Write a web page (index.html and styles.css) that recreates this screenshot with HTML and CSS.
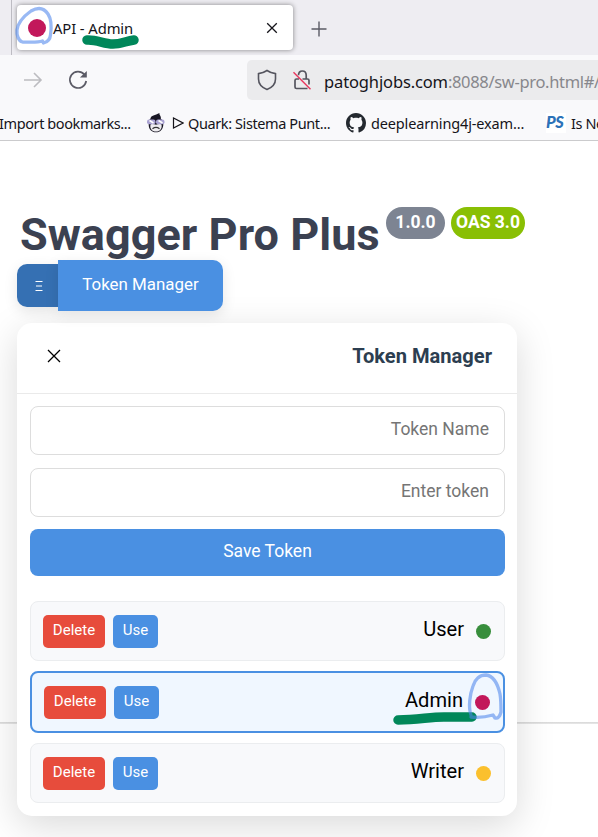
FILE: index.html
```
<!DOCTYPE html>
<html lang="en">
<head>
<meta charset="utf-8">
<title>API - Admin</title>
<link rel="stylesheet" href="styles.css">
</head>
<body>
<div class="window">
  <header class="browser">
    <div class="tabs">
      <div class="tab">
        <span class="favicon"></span>
        <span class="tab-title">API - Admin</span>
        <svg class="tab-close" width="12" height="12" viewBox="0 0 12 12"><path d="M1.2 1.2l9.6 9.6M10.8 1.2l-9.6 9.6"/></svg>
      </div>
      <svg class="tab-add" width="16" height="16" viewBox="0 0 16 16"><path d="M8 .5v15M.5 8h15"/></svg>
    </div>
    <div class="nav">
      <svg class="forward" width="20" height="18" viewBox="0 0 20 18"><path d="M1 9h17M11 2l7 7-7 7"/></svg>
      <svg class="reload" width="20" height="20" viewBox="0 0 20 20"><path class="arc" d="M16.3 4.4A8.2 8.2 0 1 0 18.2 11"/><path class="tip" d="M18.8 1v6.6h-6.9z"/></svg>
      <div class="url">
        <svg class="shield" width="20" height="22" viewBox="0 0 20 22"><path d="M10 1.5C7.500 3.200 4.600 4.200 1.500 4.600v5.300c0 4.500 3.500 8.500 8.500 10.600 5-2.100 8.500-6.100 8.500-10.600V4.600C15.400 4.200 12.500 3.200 10 1.500z"/></svg>
        <svg class="lock" width="20" height="22" viewBox="0 0 20 22"><path d="M6.500 6.300C6.500 3.500 8.100 2 10.300 2s3.900 1.500 3.900 4.300v3.200M10.500 10h5q1.500 0 1.500 1.500v4M7 10H4.500q-1.500 0-1.500 1.500V18q0 1.500 1.500 1.500h11"/><path class="slash" d="M1.500 3.300l17 17"/></svg>
        <span class="address"><b>patoghjobs.com</b>:8088/sw-pro.html#/</span>
      </div>
    </div>
    <div class="bookmarks">
      <span class="bm bm-import">Import bookmarks...</span>
      <svg class="i-monkey" width="18" height="20" viewBox="0 0 18 20"><path d="M3.500 5.500C4 2.200 8 2.500 12.500 0c-.5 1.500.7 2.300 1 3.200.4 1 .5 1.600.3 2.500 1.800 1 2.600 3 2.500 6.300-.4 4.500-3 7.300-7.300 7.300-4.500 0-7.200-3-7.300-7.300C1.700 9 2 6.500 3.500 5.500z" fill="#191724"/><path d="M3.500 11.500c2-1 3.800-.2 5.500.2 1.700-.4 3.500-1.200 5.500-.2.900 4.300-1.500 7-5.500 7s-6.400-2.700-5.500-7z" fill="#eeecef"/><rect x="0" y="6.500" width="8.500" height="4.800" rx="2" fill="#aaa2d2"/><rect x="9" y="6.500" width="8.500" height="4.800" rx="2" fill="#aaa2d2"/><path d="M2.500 7.500l4 2.500M11.500 7.500l4 2.500" stroke="#fff" stroke-width="1.500"/><path d="M5.500 15.700q3.500-2.500 7 0" stroke="#333" stroke-width="1.300"/></svg>
      <svg class="i-play" width="12" height="12" viewBox="0 0 12 12"><path d="M1.500 1v10l9.500-5z"/></svg>
      <span class="bm bm-quark">Quark: Sistema Punt...</span>
      <svg class="i-github" width="20" height="20" viewBox="0 0 16 16"><path d="M8 0C3.580 0 0 3.580 0 8c0 3.540 2.290 6.530 5.470 7.590.4.070.55-.17.55-.38 0-.19-.01-.82-.01-1.490-2.010.37-2.530-.49-2.690-.94-.09-.23-.48-.94-.82-1.130-.28-.15-.68-.52-.01-.53.63-.01 1.080.58 1.230.82.72 1.210 1.870.87 2.330.66.070-.52.28-.87.51-1.070-1.780-.2-3.640-.89-3.640-3.950 0-.87.31-1.590.82-2.150-.08-.2-.36-1.020.08-2.120 0 0 .67-.21 2.200.82.64-.18 1.320-.27 2-.27s1.360.09 2 .27c1.530-1.040 2.200-.82 2.200-.82.44 1.100.16 1.920.08 2.120.51.56.82 1.270.82 2.150 0 3.070-1.870 3.750-3.650 3.950.29.25.54.73.54 1.480 0 1.070-.01 1.930-.01 2.200 0 .21.15.46.55.38A8.010 8.010 0 0 0 16 8c0-4.420-3.580-8-8-8z"/></svg>
      <span class="bm bm-deep">deeplearning4j-exam...</span>
      <span class="i-ps">PS</span>
      <span class="bm bm-is">Is Ne</span>
    </div>
  </header>
  <main class="page">
    <div class="heading">
      <h1>Swagger Pro Plus</h1>
      <span class="badge version">1.0.0</span>
      <span class="badge oas">OAS 3.0</span>
    </div>
    <div class="launcher">
      <button class="grip"><svg width="8" height="12" viewBox="0 0 8 12"><path d="M.5 1.500h7M1 6h6M.5 10.500h7"/></svg></button>
      <button class="open">Token Manager</button>
    </div>
    <section class="panel">
      <div class="panel-head">
        <svg width="14" height="14" viewBox="0 0 14 14"><path d="M1 1l12 12M13 1L1 13"/></svg>
        <h2>Token Manager</h2>
      </div>
      <div class="panel-body">
        <div class="field"><span>Token Name</span></div>
        <div class="field"><span>Enter token</span></div>
        <button class="save">Save Token</button>
        <div class="tokens">
          <div class="token"><button class="del">Delete</button><button class="use">Use</button><span class="name">User</span><i class="dot green"></i></div>
          <div class="token active"><button class="del">Delete</button><button class="use">Use</button><span class="name">Admin</span><i class="dot pink"></i></div>
          <div class="token"><button class="del">Delete</button><button class="use">Use</button><span class="name">Writer</span><i class="dot yellow"></i></div>
        </div>
      </div>
    </section>
  </main>
  <svg class="marks" width="598" height="837" viewBox="0 0 598 837">
    <path class="marker" d="M87 40C97 39.500 104 44 113 44c8 0 13-3 21-4"/>
    <path class="marker" d="M398 720c20 0 31-3 46-3h28"/>
    <path class="pencil" d="M17 30C18 22 24 16 31 11c7-4 13-3 17 3 4 6 3.500 14 2.500 21-.5 5-3 7-7 8l-1-2c-6 2-14 1-20 1-4-1-6-7-5.500-12z"/>
    <path class="pencil" d="M471 715c-3-8-1-21 2-29 2-7 7-11 13-11 8 1 12 10 14 19 1 6 1 13 1 18-1 4-3 7-6 6l-2-3c-7 2-14 3-22 2"/>
  </svg>
</div>
</body>
</html>
```
FILE: styles.css
```
* { box-sizing: border-box; }
body { margin: 0; background: #fff; font-family: Roboto, "Liberation Sans", sans-serif; }
h1, h2 { margin: 0; }
button { border: 0; margin: 0; padding: 0; color: #fff; font-family: inherit; }
svg { display: block; flex: none; fill: none; }
.window { position: relative; width: 598px; height: 837px; overflow: hidden; }
.browser { height: 141px; background: #f9f9fb; border-bottom: 1px solid #cbcbcd; font-family: "Noto Sans", "Open Sans", sans-serif; color: #15141a; }
.tabs { display: flex; height: 55px; margin-left: 11px; padding: 5px 0 0 4px; border-left: 1px solid #bdbcc3; background: #eeedf2; box-shadow: -11px 0 #eeedf2; }
.tab { display: flex; align-items: center; width: 276px; height: 45px; margin-left: 1px; padding: 0 15px 0 11px; border-radius: 4px; background: #fff; box-shadow: 0 0 5px rgba(0,0,0,.45); }
.favicon { width: 18px; height: 18px; border-radius: 50%; background: #c2185b; }
.tab-title { margin-left: 7px; font-size: 14.800px; letter-spacing: -.1px; white-space: nowrap; }
.tab-close { margin-left: auto; stroke: #15141a; stroke-width: 1.300; }
.tab-add { margin: 16px 0 0 18px; stroke: #5b5b66; stroke-width: 1.400; }
.nav { display: flex; align-items: center; height: 50px; padding-left: 23px; }
.forward { stroke: #bcbcc0; stroke-width: 1.600; }
.reload { margin-left: 25px; }
.reload .arc { stroke: #5b5b66; stroke-width: 1.700; }
.reload .tip { fill: #5b5b66; }
.url { display: flex; align-items: center; width: 351px; height: 40px; margin-left: 159px; padding-left: 10px; border-radius: 5px 0 0 5px; background: #ebebed; overflow: hidden; flex: none; }
.shield { stroke: #55555f; stroke-width: 1.600; }
.lock { margin-left: 15px; stroke: #55555f; stroke-width: 1.700; }
.lock .slash { stroke: #e8365d; stroke-width: 1.500; }
.address { margin: 2px 0 0 12px; font-size: 16.500px; letter-spacing: -.33px; color: #87878c; white-space: nowrap; }
.address b { font-weight: 400; letter-spacing: -.13px; color: #15141a; }
.bookmarks { display: flex; align-items: center; height: 35px; overflow: hidden; }
.bm { flex: none; font-size: 14.500px; white-space: nowrap; letter-spacing: -.4px; }
.bm-import { width: 147px; margin-left: -1px; }
.i-monkey { margin-left: 1px; }
.i-play { margin: 0 4px 0 7px; stroke: #15141a; stroke-width: 1.200; }
.bm-quark { width: 158px; }
.i-github { fill: #24292f; }
.bm-deep { width: 175px; margin-left: 5px; letter-spacing: -.15px; }
.i-ps { flex: none; width: 20px; height: 20px; background: #fff; color: #2c72b8; font: italic 900 16.500px/19px "Lato", sans-serif; letter-spacing: -.5px; }
.bm-is { margin-left: 5px; }
.page { height: 696px; padding: 66px 0 0 17px; background: linear-gradient(#d7d7d7, #e9e9e9) 0 581px / 100% 2px no-repeat #fff; }
.heading { display: flex; height: 53px; padding-left: 3px; }
h1 { width: 360px; margin-right: 6px; font-size: 45px; line-height: 55px; letter-spacing: .05px; color: #3b4151; white-space: nowrap; }
.badge { height: 32px; border-radius: 16px; color: #fff; font-size: 17.500px; font-weight: 700; line-height: 31px; text-align: center; white-space: nowrap; }
.version { width: 59px; margin-right: 6px; background: #7d8492; }
.oas { width: 74px; background: #89bf04; }
.launcher { display: flex; align-items: center; height: 51px; width: 206px; }
.grip { display: flex; align-items: center; justify-content: center; width: 41px; height: 43px; border-radius: 10px 0 0 10px; background: #3570b3; box-shadow: 0 4px 14px rgba(0,0,0,.1); }
.grip svg { stroke: #fff; stroke-width: 1.200; margin-left: 2px; }
.open { width: 165px; height: 51px; padding-bottom: 4px; border-radius: 0 10px 10px 0; background: #4a90e2; box-shadow: 0 4px 14px rgba(0,0,0,.1); font-size: 16.900px; }
.panel { width: 500px; height: 493px; margin-top: 12px; border-radius: 15px; background: #fff; box-shadow: 0 10px 38px rgba(0,0,0,.15); }
.panel-head { display: flex; align-items: center; justify-content: space-between; height: 71px; padding: 0 25px 4px 30px; border-bottom: 1px solid #eaeaea; }
.panel-head svg { stroke: #000; stroke-width: 1.300; }
h2 { font-size: 20.100px; line-height: 24px; color: #2c3e50; }
.panel-body { padding: 12px 12px 13px 13px; }
.field { height: 49px; margin-bottom: 13px; padding: 0 15px; border: 1px solid #ddd; border-radius: 8px; font-size: 17.500px; line-height: 44px; text-align: right; color: #757575; }
.save { display: block; width: 475px; height: 47px; margin-top: -1px; padding-bottom: 4px; border-radius: 8px; background: #4a90e2; font-size: 17.500px; }
.tokens { display: flex; flex-direction: column; gap: 10px; margin-top: 25px; }
.token { display: flex; align-items: center; height: 60px; padding: 0 12px; border: 1px solid #ebedef; border-radius: 8px; background: #f8f9fb; }
.token.active { height: 62px; border: 2px solid #4a90e2; background: #f0f7ff; }
.token button { height: 33px; border-radius: 5px; font-size: 15px; padding-bottom: 2px; }
.del { width: 62px; background: #e74c3c; }
.use { width: 45px; margin-left: 8px; background: #4a90e2; }
.name { margin: 0 12px 4px auto; font-size: 20.100px; line-height: 24px; color: #000; }
.dot { width: 15px; height: 15px; margin: 1px 1px 0 0; border-radius: 50%; }
.green { background: #388e3c; }
.pink { background: #c2185b; }
.yellow { background: #fbc02d; }
.marks { position: absolute; inset: 0; pointer-events: none; }
.marker { stroke: #00875a; stroke-width: 9.500; stroke-linecap: round; stroke-linejoin: round; }
.pencil { stroke: #4f86ec; stroke-opacity: .58; stroke-width: 3.300; stroke-linecap: round; stroke-linejoin: round; }
```
